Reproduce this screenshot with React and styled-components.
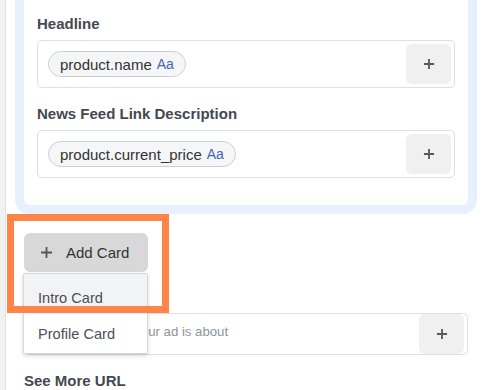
import React from 'react';
import styled, { createGlobalStyle } from 'styled-components';

const GlobalStyle = createGlobalStyle`
  html, body {
    margin: 0;
    padding: 0;
    background: #ffffff;
    overflow: hidden;
  }
  body {
    font-family: "Liberation Sans", Arial, Helvetica, sans-serif;
    color: #444950;
  }
  * {
    box-sizing: border-box;
  }
`;

const Page = styled.div`
  display: flex;
  width: 486px;
  height: 390px;
  overflow: hidden;
`;

const SideStrip = styled.div`
  width: 6px;
  flex: none;
  background: #f2f2f2;
  border-right: 1px solid #e2e2e2;
`;

const Main = styled.div`
  flex: 1;
  padding: 0 18px;
  display: flex;
  flex-direction: column;
`;

const CarouselCard = styled.div`
  background: #ffffff;
  border-radius: 0 0 6px 6px;
  box-shadow: 0 0 0 9px #e7f0fd;
  padding: 15px 13px 27px;
  display: flex;
  flex-direction: column;
`;

const Label = styled.div`
  font-weight: 700;
  font-size: 15px;
  line-height: 18px;
  color: #444950;
  margin-top: ${(p) => p.$top || 0}px;
`;

const Field = styled.div`
  margin-top: ${(p) => p.$gap || 7}px;
  height: 48px;
  border: 1px solid #dddfe2;
  border-radius: 5px;
  display: flex;
  align-items: ${(p) => (p.$textTop ? 'flex-start' : 'center')};
  justify-content: space-between;
  padding: 0 3px 0 10px;
`;

const Chip = styled.span`
  display: inline-flex;
  align-items: center;
  gap: 5px;
  height: 26px;
  padding: 0 11px;
  border: 1px solid #ccd0d5;
  border-radius: 13px;
  background: #f5f6f7;
  font-size: 15px;
  color: #333;
`;

const Type = styled.span`
  font-size: 14px;
  color: #4267b2;
`;

const Placeholder = styled.span`
  font-size: 13.2px;
  color: #8d949e;
  padding-top: 10px;
  padding-left: 1px;
`;

const PlusButton = styled.button`
  width: 45px;
  height: 40px;
  border: none;
  border-radius: 6px;
  background: #f0f0f0;
  display: flex;
  align-items: center;
  justify-content: center;
  padding: 0;
  color: #555a61;
  align-self: center;
`;

const AddArea = styled.div`
  position: relative;
  margin-top: 28px;
  align-self: flex-start;
`;

const AddButton = styled.button`
  width: 124px;
  height: 39px;
  border: none;
  border-radius: 6px;
  background: #d8d8d8;
  display: flex;
  align-items: center;
  gap: 13px;
  padding: 0 0 0 16px;
  font-family: inherit;
  font-size: 15px;
  color: #333;
`;

const AddIcon = styled.span`
  display: flex;
  color: #555;
`;

const Menu = styled.ul`
  position: absolute;
  top: 40px;
  left: -1px;
  width: 125px;
  margin: 0;
  padding: 0;
  list-style: none;
  background: #fff;
  border: 1px solid #d3d6da;
  border-radius: 2px;
  box-shadow: 0 2px 4px rgba(0, 0, 0, 0.15);
  z-index: 2;
`;

const MenuItem = styled.li`
  height: ${(p) => (p.$active ? 40 : 39)}px;
  padding: ${(p) => (p.$active ? 8 : 0)}px 0 0 14px;
  display: flex;
  align-items: center;
  font-size: 14.6px;
  color: #4b4f56;
  background: ${(p) => (p.$active ? '#f2f3f5' : '#fff')};
`;

const Highlight = styled.div`
  position: absolute;
  left: -17px;
  top: -19px;
  width: 162px;
  height: 99px;
  border: 7px solid #ff8448;
  pointer-events: none;
  z-index: 3;
`;

const Plus = ({ size = 13, stroke = 2 }) => (
  <svg width={size} height={size} viewBox="0 0 13 13" fill="none">
    <path d="M6.5 1v11M1 6.5h11" stroke="currentColor" strokeWidth={stroke} />
  </svg>
);

const fields = [
  { label: 'Headline', token: 'product.name' },
  { label: 'News Feed Link Description', token: 'product.current_price' },
];

export default function App() {
  return (
    <>
      <GlobalStyle />
      <Page>
        <SideStrip />
        <Main>
          <CarouselCard>
            {fields.map((f, i) => (
              <React.Fragment key={f.label}>
                <Label $top={i === 0 ? 0 : 17}>{f.label}</Label>
                <Field>
                  <Chip>
                    {f.token}
                    <Type>Aa</Type>
                  </Chip>
                  <PlusButton>
                    <Plus size={12} />
                  </PlusButton>
                </Field>
              </React.Fragment>
            ))}
          </CarouselCard>

          <AddArea>
            <AddButton>
              <AddIcon>
                <Plus size={13} stroke={1.8} />
              </AddIcon>
              Add Card
            </AddButton>
            <Menu>
              <MenuItem $active>Intro Card</MenuItem>
              <MenuItem>Profile Card</MenuItem>
            </Menu>
            <Highlight />
          </AddArea>

          <Field $textTop $gap={41}>
            <Placeholder>Tell people what your ad is about</Placeholder>
            <PlusButton>
              <Plus size={12} />
            </PlusButton>
          </Field>

          <Label $top={17}>See More URL</Label>
        </Main>
      </Page>
    </>
  );
}
